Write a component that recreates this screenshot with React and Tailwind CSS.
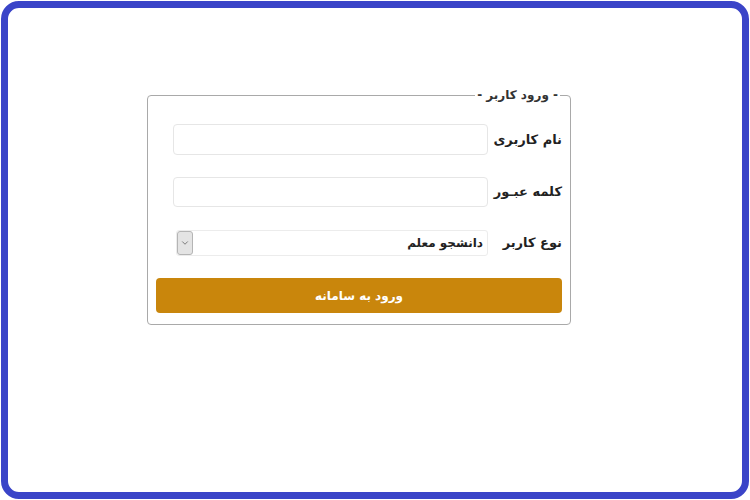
import { ChevronDown } from "lucide-react";

const font = { fontFamily: '"DejaVu Sans", "Noto Sans", sans-serif' };

const Row = ({ label, className, children }) => (
    <div className={`flex items-center ${className}`}>
        <label className="w-[74px] shrink-0 text-right text-[13px] font-bold text-[#222]">{label}</label>
        {children}
    </div>
);

const App = () => {
    return (
        <div className="h-[500px] w-[750px] bg-white p-px" style={font}>
            <div className="h-full w-full rounded-[18px] border-[7px] border-[#3a44c8] bg-white pl-[139px] pt-[78px]">
                <fieldset dir="rtl" className="flex w-[424px] flex-col rounded-[4px] border border-[#a9a9a9] px-[8px] pb-[11px]">
                    <legend className="mr-[2px] px-[2px] text-[12px] font-bold leading-[18px] text-[#333]">- ورود کاربر -</legend>

                    <Row label="نام کاربری" className="mt-[20px] h-[31px]">
                        <input type="text" className="h-full w-[315px] rounded-[4px] border border-[#e6e6e6] bg-white outline-none" />
                    </Row>

                    <Row label="کلمه عبـور" className="mt-[22px] h-[30px]">
                        <input type="password" className="h-full w-[315px] rounded-[4px] border border-[#e6e6e6] bg-white outline-none" />
                    </Row>

                    <Row label="نوع کاربر" className="mt-[23px] h-[26px]">
                        <div className="flex h-full w-[312px] items-center justify-between rounded-[3px] border border-[#ececec] bg-white">
                            <span className="pr-[4px] text-[12px] font-bold text-[#222]">دانشجو معلم</span>
                            <span className="flex h-full w-[16px] items-center justify-center rounded-[3px] border border-[#b5b5b5] bg-[#e4e4e4]">
                                <ChevronDown size={10} strokeWidth={2} className="text-[#666]" />
                            </span>
                        </div>
                    </Row>

                    <button className="mt-[22px] h-[35px] w-full rounded-[4px] bg-[#c9860c] text-[12px] font-bold text-white">
                        ورود به سامانه
                    </button>
                </fieldset>
            </div>
        </div>
    );
};

export default App;
